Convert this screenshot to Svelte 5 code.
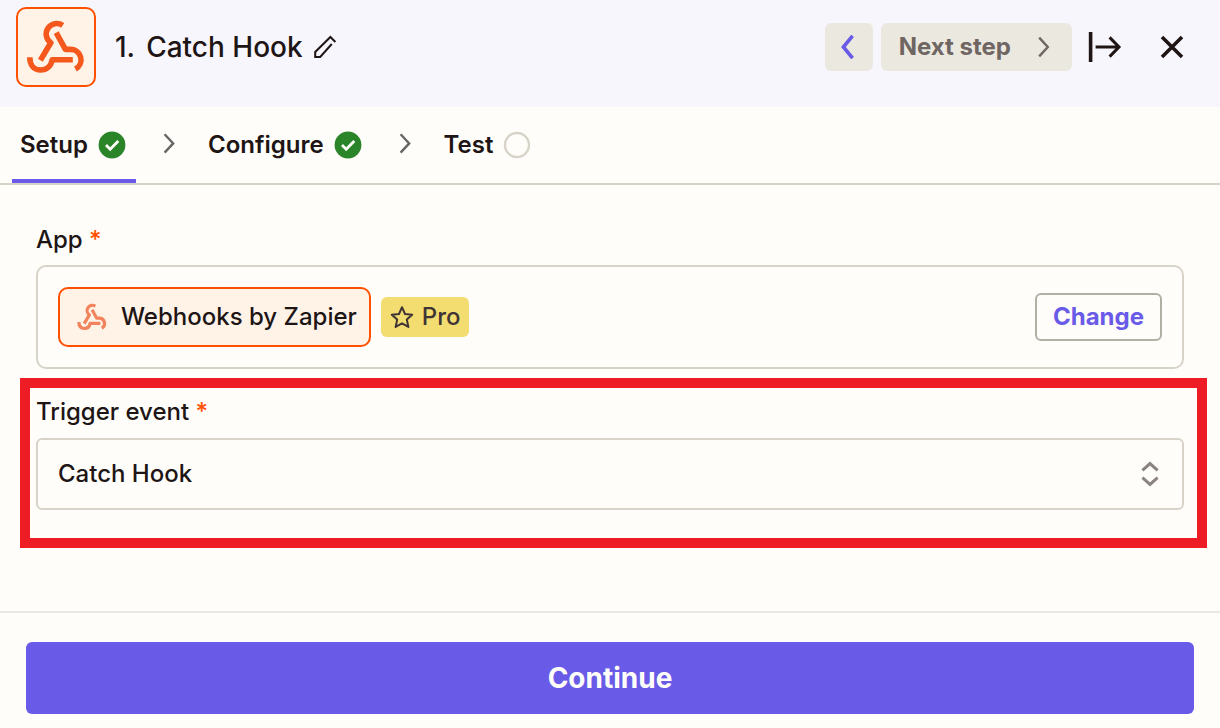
<script>
  const events = ['Catch Hook'];
  let selected = $state('Catch Hook');
</script>

{#snippet webhook()}
  <svg class="webhook" viewBox="10 10 60 60" aria-hidden="true">
    <path d="M46.7 18.4A10.4 10.4 0 1 0 34.8 35.8L24.4 53.3" />
    <path d="M40.2 25.6L49.4 42.4H54A10.4 10.4 0 0 1 59.4 62" />
    <path d="M56.8 52.7H36.2C35 59.5 30.2 63 24.6 63C17.8 63 13.8 58 13.8 50.2" />
  </svg>
{/snippet}

{#snippet done()}
  <svg class="status" viewBox="0 0 32 32" role="img" aria-label="Complete">
    <circle cx="16" cy="16" r="13.4" fill="#2a8529" />
    <path d="M10 16L14.2 20.2L22.3 12.1" fill="none" stroke="#fffdf9" stroke-width="2.8" />
  </svg>
{/snippet}

{#snippet separator()}
  <svg class="separator" viewBox="0 0 32 32" aria-hidden="true">
    <path d="M12.6 5.2L21.2 14.4L12.6 23.6" fill="none" stroke="#666" stroke-width="2.4" />
  </svg>
{/snippet}

<div class="panel">
  <header>
    <div class="logo">{@render webhook()}</div>
    <h1><span>1.</span> <span>Catch Hook</span></h1>
    <button class="bare edit" aria-label="Rename step">
      <svg viewBox="0 0 24 24" width="24" height="24" fill="none" stroke="#201515" stroke-width="2">
        <path d="M22.4 7L17.4 2L2.2 17V22H7.2L18.8 9" />
      </svg>
    </button>
    <div class="actions">
      <button class="soft back" aria-label="Previous step">
        <svg viewBox="0 0 24 24" width="24" height="24" fill="none" stroke="#695be8" stroke-width="3.6">
          <path d="M17.6 .8L8.4 12L17.6 23.2" />
        </svg>
      </button>
      <button class="soft next">
        Next step
        <svg viewBox="0 0 24 24" width="24" height="24" fill="none" stroke="#6f6664" stroke-width="2.4">
          <path d="M7.2 2.6L15.8 12L7.2 21.4" />
        </svg>
      </button>
      <button class="bare icon" aria-label="Collapse panel">
        <svg viewBox="0 0 34 32" width="34" height="32" fill="none" stroke="#201515">
          <path d="M2.6 1V31" stroke-width="3.6" />
          <path d="M7.6 16H31M21.6 6.4L31 16L21.6 25.6" stroke-width="3" />
        </svg>
      </button>
      <button class="bare icon close" aria-label="Close">
        <svg viewBox="0 0 24 24" width="24" height="24" fill="none" stroke="#201515" stroke-width="3.6">
          <path d="M2 2L22 22M22 2L2 22" />
        </svg>
      </button>
    </div>
  </header>

  <nav aria-label="Step progress">
    <button class="tab active" aria-current="step">Setup {@render done()}</button>
    {@render separator()}
    <button class="tab">Configure {@render done()}</button>
    {@render separator()}
    <button class="tab">
      Test
      <svg class="status" viewBox="0 0 32 32" role="img" aria-label="Not complete">
        <circle cx="16" cy="16" r="12" fill="none" stroke="#d7d3c9" stroke-width="2.4" />
      </svg>
    </button>
  </nav>

  <main>
    <section class="app">
      <h2>App <span class="required">*</span></h2>
      <div class="app-card">
        <div class="chip">{@render webhook()}Webhooks by Zapier</div>
        <div class="plan">
          <svg viewBox="0 0 24 24" width="24" height="24" fill="none" stroke="#403535" stroke-width="2" stroke-linejoin="round">
            <path d="M12 2.2L15 9L22.2 9.7L16.8 14.6L18.4 21.9L12 18.3L5.6 21.9L7.2 14.6L1.8 9.7L9 9Z" />
          </svg>
          Pro
        </div>
        <button class="change">Change</button>
      </div>
    </section>

    <section class="event">
      <label for="event">Trigger event <span class="required">*</span></label>
      <div class="select">
        <select id="event" bind:value={selected}>
          {#each events as event}
            <option>{event}</option>
          {/each}
        </select>
        <svg viewBox="0 0 24 32" width="24" height="32" fill="none" stroke="#8a8380" stroke-width="3" aria-hidden="true">
          <path d="M4.4 12.4L12 5.6L19.6 12.4M4.4 19.6L12 26.4L19.6 19.6" />
        </svg>
      </div>
    </section>
  </main>

  <footer>
    <button class="continue">Continue</button>
  </footer>
</div>

<style>
  :global(body) {
    margin: 0;
    background: #fffdf9;
  }

  .panel {
    box-sizing: border-box;
    min-height: 100vh;
    display: flex;
    flex-direction: column;
    color: #201515;
    font: 500 24px/32px Inter, sans-serif;
  }

  .panel * {
    box-sizing: border-box;
  }

  button,
  select {
    font: inherit;
    color: inherit;
    margin: 0;
    cursor: pointer;
  }

  button {
    padding: 0;
    border: 0;
    background: none;
    display: flex;
    align-items: center;
    justify-content: center;
  }

  svg {
    display: block;
    flex: none;
  }

  header {
    display: flex;
    align-items: center;
    padding: 7px 24px 20px 16px;
    background: #f7f6fd;
  }

  .logo {
    width: 80px;
    height: 80px;
    display: grid;
    place-items: center;
    border: 2px solid #ff4f00;
    border-radius: 10px;
    background: #fff3e8;
  }

  .webhook {
    width: 60px;
    height: 60px;
    fill: none;
    stroke: #f4581c;
    stroke-width: 5.6;
    stroke-linejoin: round;
  }

  h1 {
    margin: 0 10px 0 19px;
    display: flex;
    gap: 11px;
    font-size: 28px;
    font-weight: 500;
    line-height: 32px;
  }

  .actions {
    display: flex;
    margin-left: auto;
  }

  .soft {
    height: 48px;
    border-radius: 6px;
    background: #ebe9df;
    color: #6f6664;
    font-weight: 700;
  }

  .back {
    width: 48px;
    margin-right: 8px;
    padding-right: 4px;
  }

  .next {
    padding: 0 16px 0 18px;
    gap: 21px;
  }

  .icon {
    width: 48px;
    height: 48px;
    margin-left: 9px;
  }

  .close {
    margin-left: 19px;
  }

  nav {
    display: flex;
    padding: 0 12px;
    border-bottom: 2px solid #d7d3c9;
  }

  .tab {
    height: 76px;
    padding: 4px 8px 0;
    gap: 8px;
    border-bottom: 4px solid transparent;
    font-weight: 600;
  }

  .active {
    border-color: #695be8;
  }

  .status {
    width: 32px;
    height: 32px;
  }

  .separator {
    width: 32px;
    height: 32px;
    margin: 22px 16px 0;
  }

  main {
    flex: 1;
    padding-bottom: 63px;
  }

  .app {
    padding: 39px 36px 0;
  }

  h2 {
    margin: 0 0 9px;
    font: inherit;
  }

  .required {
    color: #ff4f00;
  }

  .app-card {
    display: flex;
    align-items: center;
    padding: 20px;
    border: 2px solid #d7d3c9;
    border-radius: 10px;
  }

  .chip {
    height: 60px;
    display: flex;
    align-items: center;
    gap: 14px;
    padding: 0 12px 0 17px;
    border: 2px solid #ff4f00;
    border-radius: 10px;
    background: #fff3e8;
  }

  .chip .webhook {
    width: 30px;
    height: 30px;
    stroke: #f2835c;
    stroke-width: 6.4;
  }

  .plan {
    height: 40px;
    display: flex;
    align-items: center;
    gap: 8px;
    margin-left: 10px;
    padding: 0 8px 0 9px;
    border-radius: 6px;
    background: #f3dc70;
    color: #403535;
  }

  .change {
    height: 48px;
    margin-left: auto;
    padding: 0 16px;
    border: 2px solid #b2b0a5;
    border-radius: 6px;
    color: #695be8;
    font-weight: 700;
  }

  .event {
    margin: 9px 13px 0 20px;
    padding: 8px 13px 28px 6px;
    border: 10px solid #ee1c25;
  }

  label {
    display: block;
    margin-bottom: 10px;
  }

  .select {
    position: relative;
  }

  select {
    display: block;
    width: 100%;
    height: 72px;
    padding: 0 56px 0 20px;
    appearance: none;
    border: 2px solid #d7d3c9;
    border-radius: 6px;
    background: transparent;
  }

  .select svg {
    position: absolute;
    top: 20px;
    right: 22px;
    pointer-events: none;
  }

  footer {
    padding: 29px 26px 14px;
    border-top: 2px solid #e8e7e3;
  }

  .continue {
    width: 100%;
    height: 72px;
    border-radius: 6px;
    background: #695be8;
    color: #fffdf9;
    font-size: 28px;
    font-weight: 700;
  }
</style>
